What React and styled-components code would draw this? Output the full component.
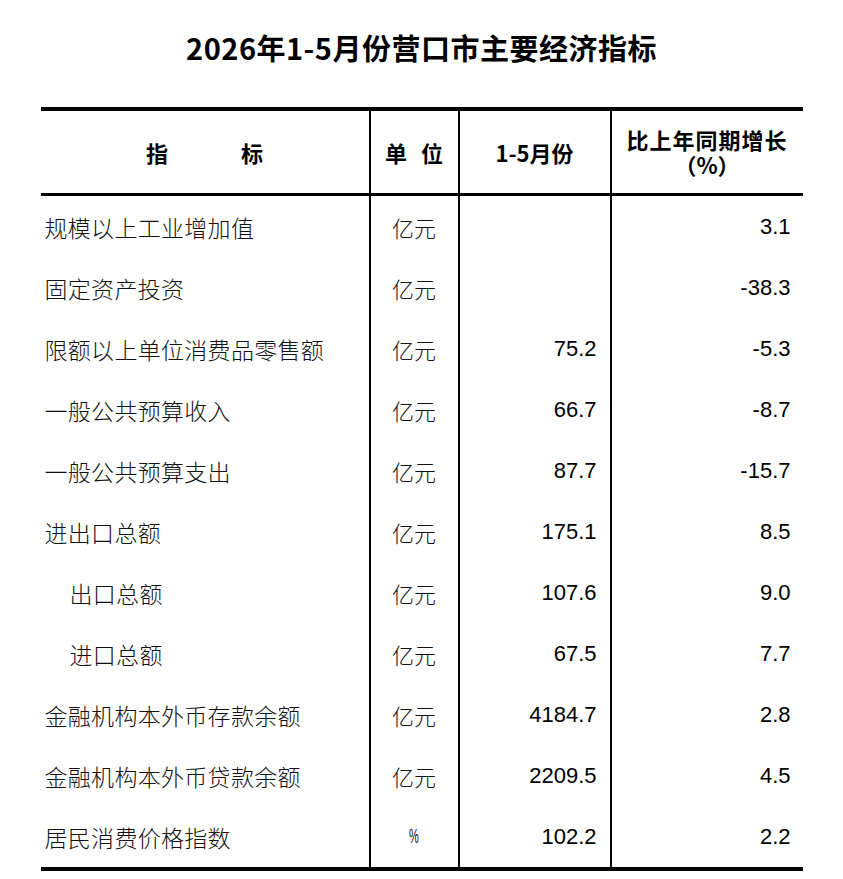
import React from "react";
import styled, { createGlobalStyle } from "styled-components";

const GlobalStyle = createGlobalStyle`
  html, body { margin: 0; padding: 0; background: #ffffff; }
  body { font-family: "Noto Sans CJK SC", "Noto Sans", sans-serif; color: #000; }
`;

const Page = styled.div`
  width: 843px;
  display: flex;
  flex-direction: column;
  align-items: center;
`;

const Title = styled.h1`
  margin: 30px 0 0;
  font-family: "Noto Sans CJK SC", sans-serif;
  font-weight: 700;
  font-size: 29px;
  line-height: 35px;
  letter-spacing: 0.5px;
  color: #000;
`;

const Table = styled.div`
  margin-top: 42px;
  width: 762px;
  display: grid;
  grid-template-columns: 328px 89px 152px 193px;
  border-top: 4px solid #000;
  border-bottom: 4px solid #000;
`;

const HeadCell = styled.div`
  height: 82px;
  border-bottom: 3px solid #000;
  border-left: ${(p) => (p.$first ? "none" : "2px solid #000")};
  display: flex;
  flex-direction: column;
  align-items: center;
  justify-content: center;
  font-family: "Noto Sans CJK SC", sans-serif;
  font-weight: 700;
  font-size: 22px;
  line-height: 25px;
  color: #000;
`;

const HeadLine = styled.span`
  display: block;
  height: 25px;
  line-height: 25px;
  letter-spacing: ${(p) => p.$ls || 0}px;
  overflow: visible;
`;

const Spread = styled.div`
  display: flex;
  gap: ${(p) => p.$gap}px;
`;

const Cell = styled.div`
  height: 61px;
  border-left: ${(p) => (p.$first ? "none" : "2px solid #000")};
  display: flex;
  align-items: center;
  justify-content: ${(p) =>
    p.$align === "right" ? "flex-end" : p.$align === "center" ? "center" : "flex-start"};
  padding: 0 ${(p) => p.$pr || 0}px 0 ${(p) => p.$pl || 0}px;
  box-sizing: border-box;
`;

const Label = styled.span`
  font-family: "Noto Sans CJK SC", sans-serif;
  font-weight: 300;
  font-size: 23px;
  letter-spacing: 0.3px;
  color: #111;
  white-space: nowrap;
`;

const Unit = styled.span`
  font-family: "Noto Sans CJK SC", sans-serif;
  font-weight: 300;
  font-size: 22px;
  color: #111;
`;

const Num = styled.span`
  font-family: "Liberation Sans", Arial, sans-serif;
  font-size: 22px;
  color: #000;
`;

const Percent = styled.span`
  display: inline-block;
  font-family: "Liberation Sans", Arial, sans-serif;
  font-size: 20px;
  transform: scaleX(0.55);
  color: #111;
`;

const rows = [
  { name: "规模以上工业增加值", unit: "亿元", value: "", growth: "3.1" },
  { name: "固定资产投资", unit: "亿元", value: "", growth: "-38.3" },
  { name: "限额以上单位消费品零售额", unit: "亿元", value: "75.2", growth: "-5.3" },
  { name: "一般公共预算收入", unit: "亿元", value: "66.7", growth: "-8.7" },
  { name: "一般公共预算支出", unit: "亿元", value: "87.7", growth: "-15.7" },
  { name: "进出口总额", unit: "亿元", value: "175.1", growth: "8.5" },
  { name: "出口总额", unit: "亿元", value: "107.6", growth: "9.0", indent: true },
  { name: "进口总额", unit: "亿元", value: "67.5", growth: "7.7", indent: true },
  { name: "金融机构本外币存款余额", unit: "亿元", value: "4184.7", growth: "2.8" },
  { name: "金融机构本外币贷款余额", unit: "亿元", value: "2209.5", growth: "4.5" },
  { name: "居民消费价格指数", unit: "%", value: "102.2", growth: "2.2" },
];

export default function App() {
  return (
    <>
      <GlobalStyle />
      <Page>
        <Title>2026年1-5月份营口市主要经济指标</Title>
        <Table>
          <HeadCell $first>
            <Spread $gap={73}>
              <span>指</span>
              <span>标</span>
            </Spread>
          </HeadCell>
          <HeadCell>
            <Spread $gap={14}>
              <span>单</span>
              <span>位</span>
            </Spread>
          </HeadCell>
          <HeadCell>1-5月份</HeadCell>
          <HeadCell>
            <HeadLine $ls={1}>比上年同期增长</HeadLine>
            <HeadLine>（%）</HeadLine>
          </HeadCell>
          {rows.map((r) => (
            <React.Fragment key={r.name}>
              <Cell $first $pl={r.indent ? 29 : 4}>
                <Label>{r.name}</Label>
              </Cell>
              <Cell $align="center">
                {r.unit === "%" ? <Percent>%</Percent> : <Unit>{r.unit}</Unit>}
              </Cell>
              <Cell $align="right" $pr={13}>
                <Num>{r.value}</Num>
              </Cell>
              <Cell $align="right" $pr={12}>
                <Num>{r.growth}</Num>
              </Cell>
            </React.Fragment>
          ))}
        </Table>
      </Page>
    </>
  );
}
